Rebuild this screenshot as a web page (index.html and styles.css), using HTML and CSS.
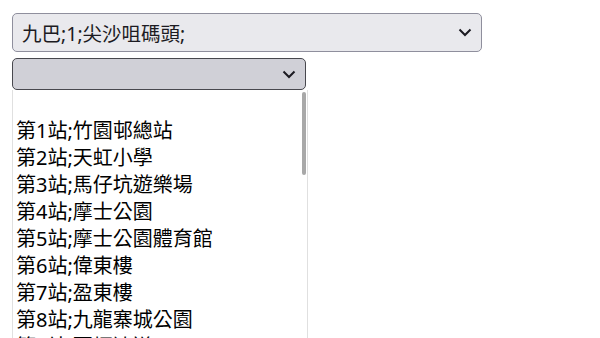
FILE: index.html
```html
<!DOCTYPE html>
<html>
<head>
    <title>九巴路線</title>
    <link rel="stylesheet" href="styles.css">
</head>
<body>
    <div class="page">
        <div class="select route">
            <span class="value">九巴;1;尖沙咀碼頭;</span>
            <svg class="chevron" width="14" height="9" viewBox="0 0 14 9"><polyline points="1.5,1.5 7,7 12.5,1.5" fill="none" stroke="#1c1b22" stroke-width="2"/></svg>
        </div>
        <div class="stop-wrap">
            <div class="select stop">
                <span class="value"></span>
                <svg class="chevron" width="14" height="9" viewBox="0 0 14 9"><polyline points="1.5,1.5 7,7 12.5,1.5" fill="none" stroke="#1c1b22" stroke-width="2"/></svg>
            </div>
            <div class="popup">
                <div class="option"></div>
                <div class="option">第1站;竹園邨總站</div>
                <div class="option">第2站;天虹小學</div>
                <div class="option">第3站;馬仔坑遊樂場</div>
                <div class="option">第4站;摩士公園</div>
                <div class="option">第5站;摩士公園體育館</div>
                <div class="option">第6站;偉東樓</div>
                <div class="option">第7站;盈東樓</div>
                <div class="option">第8站;九龍寨城公園</div>
                <div class="option">第9站;賈炳達道</div>
                <div class="thumb"></div>
            </div>
        </div>
    </div>
</body>
</html>
```

FILE: styles.css
```css
html, body {
    margin: 0;
    height: 100%;
    overflow: hidden;
    background: #fff;
}

body {
    font-family: "Noto Sans", "Noto Sans CJK TC", sans-serif;
    color: #1c1b22;
}

.page {
    padding: 13px 0 0 12px;
    display: flex;
    flex-direction: column;
    gap: 6px;
}

.select {
    box-sizing: border-box;
    display: flex;
    align-items: center;
    justify-content: space-between;
    border: 1px solid #8f8f9d;
    border-radius: 5px;
    background-color: #e9e9ed;
}

.route {
    width: 470px;
    height: 39px;
    padding: 0 9px 1px 9px;
    font-size: 19.5px;
}

.stop {
    width: 294px;
    height: 32px;
    padding: 0 9px 0 9px;
    background-color: #d0d0d7;
    border-color: #48484e;
}

.stop-wrap {
    display: flex;
    flex-direction: column;
}

.popup {
    position: relative;
    box-sizing: border-box;
    width: 296px;
    height: 260px;
    padding-top: 0;
    border: 1px solid #e0e0e0;
    border-top: none;
    background: #fff;
    overflow: hidden;
}

.option {
    height: 27px;
    line-height: 27px;
    padding-left: 3px;
    font-size: 20px;
    white-space: nowrap;
    color: #000;
}

.thumb {
    position: absolute;
    right: 1px;
    top: 2px;
    width: 4px;
    height: 83px;
    border-radius: 2px;
    background: #a8a8a8;
}
```
